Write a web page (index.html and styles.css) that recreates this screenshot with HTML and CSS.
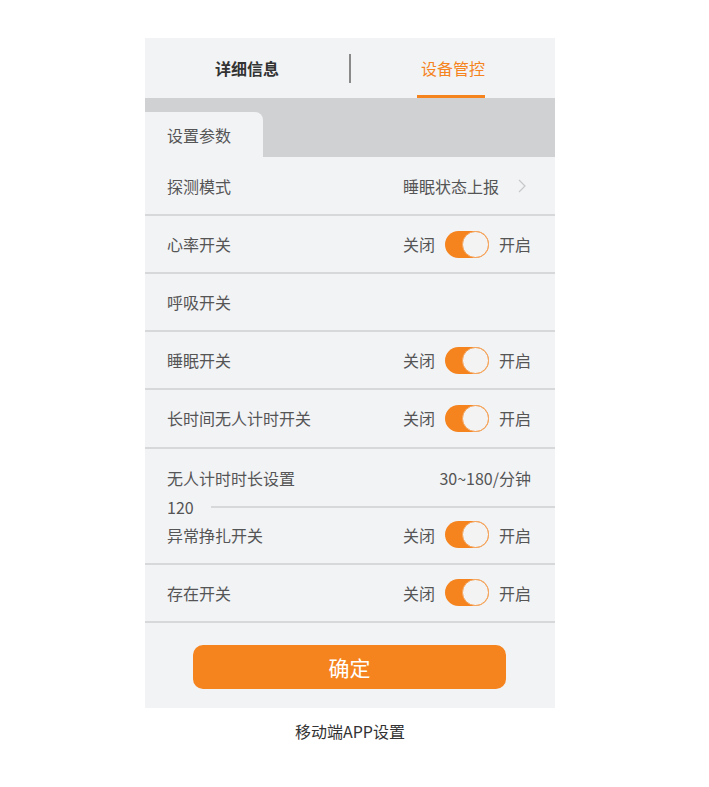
FILE: index.html
```html
<!DOCTYPE html>
<html>
<head>
    <title>移动端APP设置</title>
    <link rel="stylesheet" href="styles.css">
</head>
<body>
    <div class="page">
        <div class="phone">
            <div class="tabs">
                <div class="tab">详细信息</div>
                <div class="tab-divider"></div>
                <div class="tab active">设备管控</div>
            </div>
            <div class="subtabs">
                <div class="subtab">设置参数</div>
            </div>
            <div class="settings">
                <div class="row first">
                    <span class="label">探测模式</span>
                    <span class="value">睡眠状态上报
                        <svg class="chevron" width="8" height="14" viewBox="0 0 8 14"><path d="M1 1l6 6-6 6" fill="none" stroke="#c6c7c9" stroke-width="1.2"/></svg>
                    </span>
                </div>
                <div class="row">
                    <span class="label">心率开关</span>
                    <span class="switch-group">关闭 <span class="switch"><span class="knob"></span></span> 开启</span>
                </div>
                <div class="row">
                    <span class="label">呼吸开关</span>
                </div>
                <div class="row">
                    <span class="label">睡眠开关</span>
                    <span class="switch-group">关闭 <span class="switch"><span class="knob"></span></span> 开启</span>
                </div>
                <div class="row">
                    <span class="label">长时间无人计时开关</span>
                    <span class="switch-group">关闭 <span class="switch"><span class="knob"></span></span> 开启</span>
                </div>
                <div class="row no-border">
                    <span class="label">无人计时时长设置</span>
                    <span class="value">30~180/分钟</span>
                </div>
                <div class="input-line">
                    <span class="input-value">120</span>
                    <span class="input-rule"></span>
                </div>
                <div class="row">
                    <span class="label">异常挣扎开关</span>
                    <span class="switch-group">关闭 <span class="switch"><span class="knob"></span></span> 开启</span>
                </div>
                <div class="row">
                    <span class="label">存在开关</span>
                    <span class="switch-group">关闭 <span class="switch"><span class="knob"></span></span> 开启</span>
                </div>
            </div>
            <div class="actions">
                <button class="confirm">确定</button>
            </div>
        </div>
        <div class="caption">移动端APP设置</div>
    </div>
</body>
</html>
```

FILE: styles.css
```css
* {
    margin: 0;
    padding: 0;
    box-sizing: border-box;
    font-family: "Noto Sans CJK SC", "Noto Sans", sans-serif;
}

body {
    background: #fff;
}

.page {
    width: 410px;
    margin: 38px 0 0 145px;
}

.phone {
    background: #f2f3f5;
}

.tabs {
    height: 60px;
    display: flex;
    align-items: center;
}

.tab {
    flex: 1;
    height: 60px;
    display: flex;
    align-items: center;
    justify-content: center;
    padding-bottom: 1px;
    font-size: 16px;
    font-weight: bold;
    color: #333;
}

.tab.active {
    color: #f5841f;
    font-weight: normal;
    position: relative;
}

.tab.active::after {
    content: "";
    position: absolute;
    bottom: 0;
    left: 50%;
    width: 68px;
    margin-left: -36px;
    height: 3px;
    background: #f5841f;
}

.tab-divider {
    width: 2px;
    height: 29px;
    background: #8a8a8a;
}

.subtabs {
    height: 59px;
    background: #d0d1d3;
    display: flex;
    align-items: flex-end;
}

.subtab {
    width: 118px;
    height: 45px;
    background: #f2f3f5;
    border-top-right-radius: 8px;
    padding-left: 22px;
    display: flex;
    align-items: center;
    font-size: 16px;
    color: #555;
}

.row {
    height: 58.15px;
    padding: 0 24px 0 22px;
    display: flex;
    align-items: center;
    justify-content: space-between;
    border-bottom: 2px solid #d7d8da;
    font-size: 16px;
    color: #555;
}

.row.first {
    height: 59px;
}

.row.no-border {
    border-bottom: none;
}

.value {
    display: flex;
    align-items: center;
    gap: 19px;
}

.chevron {
    margin-right: 5px;
}

.switch-group {
    display: flex;
    align-items: center;
    gap: 10px;
}

.switch {
    width: 44px;
    height: 27px;
    border-radius: 14px;
    background: #f5841f;
    display: flex;
    align-items: center;
    justify-content: flex-end;
}

.knob {
    width: 27px;
    height: 27px;
    border-radius: 50%;
    background: #f3f3f3;
    border: 1px solid #f5a35a;
}

.input-line {
    height: 0;
    display: flex;
    align-items: center;
    padding-left: 22px;
    font-size: 16px;
    color: #555;
}

.input-rule {
    flex: 1;
    margin-left: 17px;
    border-top: 2px solid #d7d8da;
}

.actions {
    padding: 22px 49px 19px 48px;
}

.confirm {
    width: 100%;
    height: 44px;
    border: none;
    border-radius: 10px;
    background: #f5841f;
    color: #fff;
    font-size: 21px;
}

.caption {
    text-align: center;
    margin-top: 11px;
    font-size: 16px;
    color: #333;
}
```
